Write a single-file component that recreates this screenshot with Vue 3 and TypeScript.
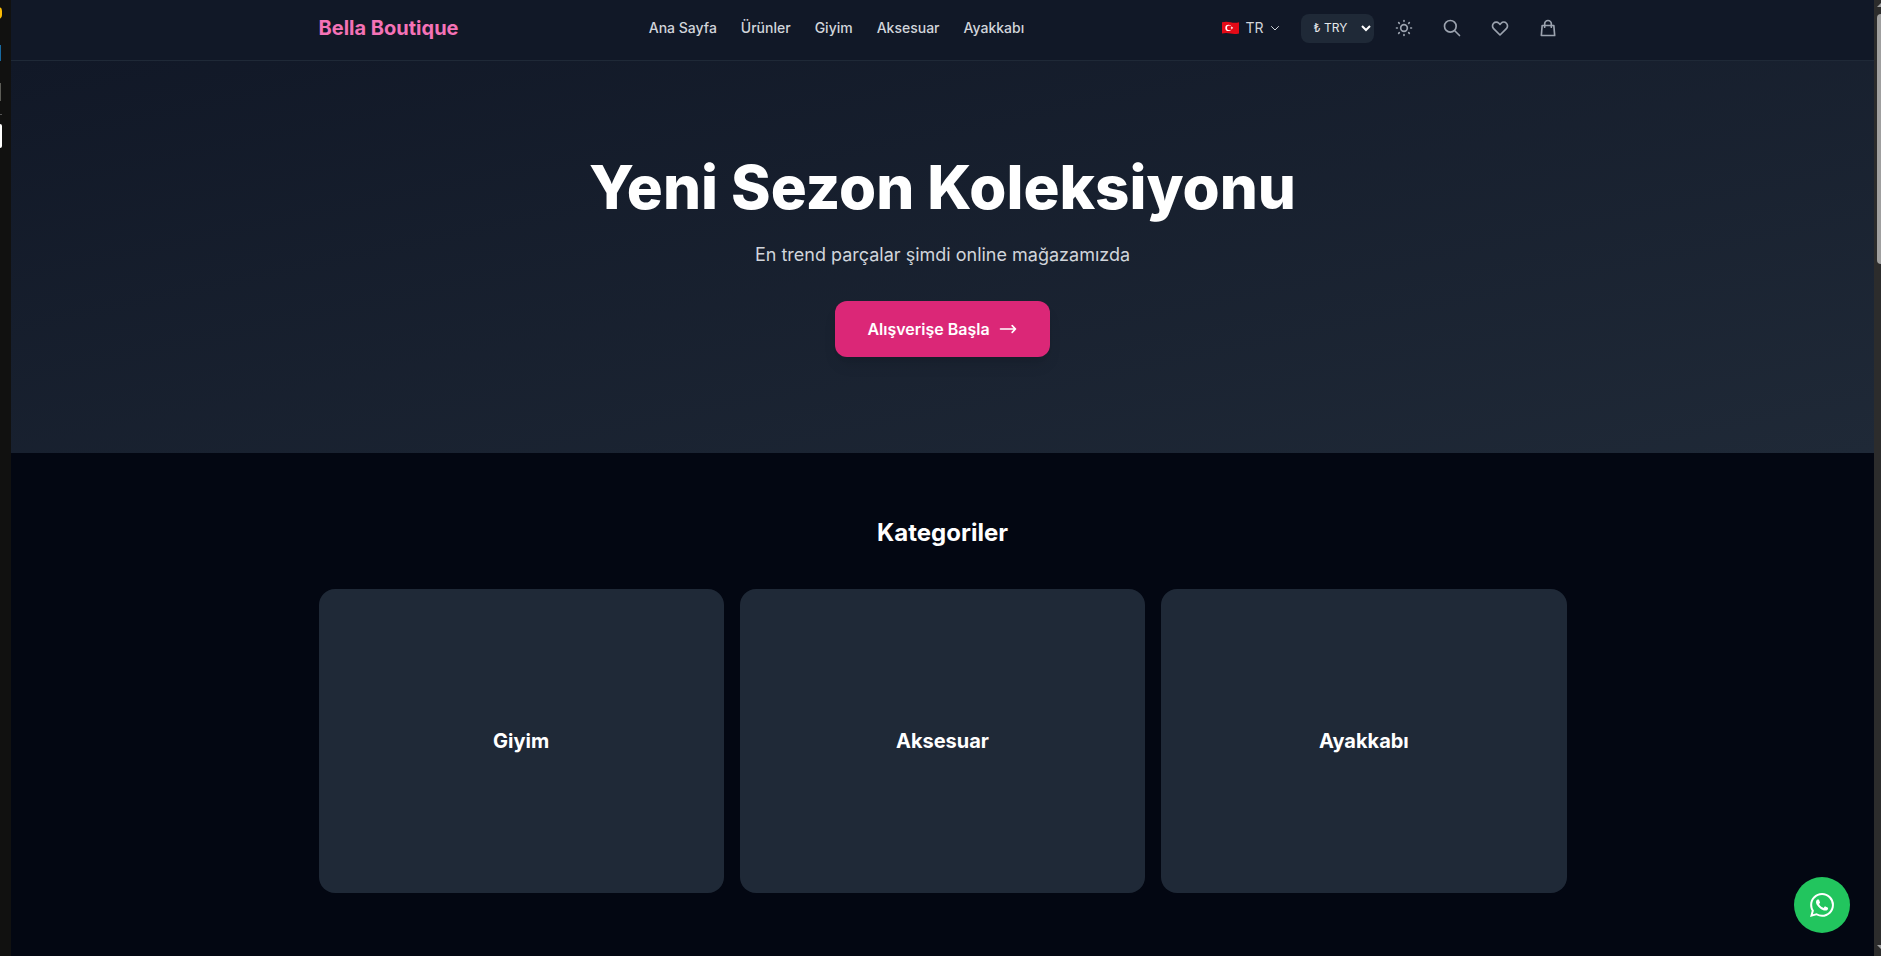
<script setup lang="ts">
import { ref } from 'vue'

interface NavItem {
  label: string
  href: string
}

const navItems: NavItem[] = [
  { label: 'Ana Sayfa', href: '#' },
  { label: 'Ürünler', href: '#urunler' },
  { label: 'Giyim', href: '#giyim' },
  { label: 'Aksesuar', href: '#aksesuar' },
  { label: 'Ayakkabı', href: '#ayakkabi' },
]

const categories: NavItem[] = [
  { label: 'Giyim', href: '#giyim' },
  { label: 'Aksesuar', href: '#aksesuar' },
  { label: 'Ayakkabı', href: '#ayakkabi' },
]

const currency = ref('TRY')
</script>

<template>
  <div class="screen">
    <div class="dock" aria-hidden="true">
      <span class="dock-dot"></span>
      <span class="dock-blue"></span>
      <span class="dock-gray"></span>
      <span class="dock-line"></span>
      <span class="dock-white"></span>
    </div>

    <div class="page">
      <header class="header">
        <div class="container header-row">
          <a class="logo" href="#">Bella Boutique</a>

          <nav class="nav">
            <a v-for="item in navItems" :key="item.label" :href="item.href">{{ item.label }}</a>
          </nav>

          <div class="tools">
            <button class="lang" type="button">
              <svg class="flag" viewBox="0 0 17 14" aria-hidden="true">
                <path d="M0 1.2Q4 .2 8.5 1.2T17 1.2V12.4Q13 13.6 8.5 12.6T0 12.6Z" fill="#e30a17" />
                <circle cx="6.4" cy="6.9" r="3.1" fill="#fff" />
                <circle cx="7.3" cy="6.9" r="2.4" fill="#e30a17" />
                <path d="M8.3 6.9l1.1-.4V5.4l.7.9 1.1-.3-.7.9.7.9-1.1-.3-.7.9V7.300z" fill="#fff" />
              </svg>
              <span>TR</span>
              <svg class="chevron" viewBox="0 0 24 24" aria-hidden="true">
                <path d="M19 9l-7 7-7-7" />
              </svg>
            </button>

            <span class="currency">
              <select v-model="currency" aria-label="Para birimi">
                <option value="TRY">₺ TRY</option>
                <option value="USD">$ USD</option>
                <option value="EUR">€ EUR</option>
              </select>
              <svg viewBox="0 0 10 10" aria-hidden="true"><path d="M1 3L5 7 9 3" /></svg>
            </span>

            <button class="icon" type="button" aria-label="Tema">
              <svg viewBox="0 0 24 24">
                <path d="M12 3v1m0 16v1m9-9h-1M4 12H3m15.364 6.364l-.707-.707M6.343 6.343l-.707-.707m12.728 0l-.707.707M6.343 17.657l-.707.707M16 12a4 4 0 11-8 0 4 4 0 018 0z" />
              </svg>
            </button>
            <button class="icon" type="button" aria-label="Ara">
              <svg viewBox="0 0 24 24">
                <path d="M21 21l-6-6m2-5a7 7 0 11-14 0 7 7 0 0114 0z" />
              </svg>
            </button>
            <button class="icon" type="button" aria-label="Favoriler">
              <svg viewBox="0 0 24 24">
                <path d="M4.318 6.318a4.500 4.500 0 000 6.364L12 20.364l7.682-7.682a4.500 4.500 0 00-6.364-6.364L12 7.636l-1.318-1.318a4.500 4.500 0 00-6.364 0z" />
              </svg>
            </button>
            <button class="icon" type="button" aria-label="Sepet">
              <svg viewBox="0 0 24 24">
                <path d="M16 11V7a4 4 0 00-8 0v4M5 9h14l1 12H4L5 9z" />
              </svg>
            </button>
          </div>
        </div>
      </header>

      <main>
        <section class="hero">
          <h1>Yeni Sezon Koleksiyonu</h1>
          <p>En trend parçalar şimdi online mağazamızda</p>
          <a class="cta" href="#urunler">
            Alışverişe Başla
            <svg viewBox="0 0 24 24" aria-hidden="true">
              <path d="M17 8l4 4m0 0l-4 4m4-4H3" />
            </svg>
          </a>
        </section>

        <section class="container categories">
          <h2>Kategoriler</h2>
          <div class="grid">
            <a v-for="cat in categories" :key="cat.label" class="card" :href="cat.href">
              <h3>{{ cat.label }}</h3>
            </a>
          </div>
        </section>
      </main>

      <a class="whatsapp" href="#whatsapp" aria-label="WhatsApp">
        <svg viewBox="0 0 24 24" aria-hidden="true">
          <path d="M17.472 14.382c-.297-.149-1.758-.867-2.030-.967-.273-.099-.471-.148-.670.150-.197.297-.767.966-.940 1.164-.173.199-.347.223-.644.075-.297-.150-1.255-.463-2.390-1.475-.883-.788-1.480-1.761-1.653-2.059-.173-.297-.018-.458.130-.606.134-.133.298-.347.446-.520.149-.174.198-.298.298-.497.099-.198.050-.371-.025-.520-.075-.149-.669-1.612-.916-2.207-.242-.579-.487-.500-.669-.510-.173-.008-.371-.010-.570-.010-.198 0-.520.074-.792.372-.272.297-1.040 1.016-1.040 2.479 0 1.462 1.065 2.875 1.213 3.074.149.198 2.096 3.200 5.077 4.487.709.306 1.262.489 1.694.625.712.227 1.360.195 1.871.118.571-.085 1.758-.719 2.006-1.413.248-.694.248-1.289.173-1.413-.074-.124-.272-.198-.570-.347m-5.421 7.403h-.004a9.870 9.870 0 01-5.031-1.378l-.361-.214-3.741.982.998-3.648-.235-.374a9.860 9.860 0 01-1.510-5.260c.001-5.450 4.436-9.884 9.888-9.884 2.640 0 5.122 1.030 6.988 2.898a9.825 9.825 0 012.893 6.994c-.003 5.450-4.437 9.884-9.885 9.884m8.413-18.297A11.815 11.815 0 0012.050 0C5.495 0 .160 5.335.157 11.892c0 2.096.547 4.142 1.588 5.945L.057 24l6.305-1.654a11.882 11.882 0 005.683 1.448h.005c6.554 0 11.890-5.335 11.893-11.893a11.821 11.821 0 00-3.480-8.413z" />
        </svg>
      </a>
    </div>

    <div class="scrollbar" aria-hidden="true">
      <span class="arrow-up"></span>
      <span class="thumb"></span>
      <span class="arrow-down"></span>
    </div>
  </div>
</template>

<style>
body {
  background: #030712;
}
</style>

<style scoped>
.screen {
  display: flex;
  min-height: 100vh;
  overflow: hidden;
  font-family: Inter, "Liberation Sans", sans-serif;
  color: #fff;
}

.screen *,
.screen *::before {
  box-sizing: border-box;
}

a {
  color: inherit;
  text-decoration: none;
}

h1,
h2,
h3,
p {
  margin: 0;
}

button {
  font: inherit;
  border: 0;
  background: none;
  cursor: pointer;
}

/* Edge of the desktop dock */
.dock {
  flex: 0 0 11px;
  display: flex;
  flex-direction: column;
  align-items: flex-start;
  overflow: hidden;
  background: #111110;
}

.dock span {
  flex: none;
}

.dock-dot {
  width: 12px;
  height: 12px;
  margin: 7px 0 0 -10px;
  border-radius: 4px;
  background: #fcbc05;
}

.dock-blue {
  width: 1px;
  height: 16px;
  margin-top: 26px;
  background: #1769a0;
}

.dock-gray {
  width: 1px;
  height: 18px;
  margin-top: 22px;
  background: #5c5c56;
}

.dock-line {
  width: 2px;
  height: 1px;
  margin-top: 13px;
  background: #555;
}

.dock-white {
  width: 2px;
  height: 24px;
  margin-top: 9px;
  border-radius: 0 2px 2px 0;
  background: #fff;
}

.page {
  flex: 1;
  min-width: 0;
  background: #030712;
}

.container {
  width: 100%;
  max-width: 1280px;
  margin: 0 auto;
  padding: 0 16px;
}

.header {
  border-bottom: 1px solid #1f2937;
  background: #111827;
}

.header-row {
  display: flex;
  align-items: center;
  justify-content: space-between;
  height: 60px;
  padding-bottom: 4px;
}

.logo {
  font-size: 20px;
  line-height: 28px;
  font-weight: 700;
  color: #f472b6;
}

.nav {
  display: flex;
  gap: 24px;
  font-size: 14px;
  line-height: 20px;
  font-weight: 500;
  color: #d1d5db;
}

.tools {
  display: flex;
  align-items: center;
  gap: 12px;
}

.lang {
  display: flex;
  align-items: center;
  gap: 6px;
  padding: 6px 8px;
  font-size: 14px;
  line-height: 20px;
  color: #d1d5db;
}

.flag {
  width: 17px;
  height: 14px;
}

.chevron {
  width: 12px;
  height: 12px;
  fill: none;
  stroke: currentColor;
  stroke-width: 2;
  stroke-linecap: round;
  stroke-linejoin: round;
}

.currency {
  position: relative;
  display: flex;
}

.currency select {
  appearance: none;
  width: 73px;
  height: 29px;
  padding: 0 12px;
  border: 0;
  border-radius: 8px;
  background: #1f2937;
  color: #e5e7eb;
  font: 400 12px/16px Inter, "Liberation Sans", sans-serif;
}

.currency svg {
  position: absolute;
  top: 9px;
  right: 3px;
  width: 10px;
  height: 10px;
  fill: none;
  stroke: #fff;
  stroke-width: 2;
  pointer-events: none;
}

.icon {
  display: flex;
  padding: 8px;
  color: #9ca3af;
}

.icon svg {
  width: 20px;
  height: 20px;
  fill: none;
  stroke: currentColor;
  stroke-width: 2;
  stroke-linecap: round;
  stroke-linejoin: round;
}

.hero {
  display: flex;
  flex-direction: column;
  align-items: center;
  padding: 96px 16px;
  background: linear-gradient(to bottom right, #111827, #1f2937);
  text-align: center;
}

.hero h1 {
  margin-bottom: 24px;
  font-size: 60px;
  line-height: 60px;
  font-weight: 800;
}

.hero p {
  margin-bottom: 32px;
  font-size: 18px;
  line-height: 28px;
  color: #d1d5db;
}

.cta {
  display: flex;
  align-items: center;
  gap: 8px;
  padding: 16px 32px;
  border-radius: 12px;
  background: #db2777;
  box-shadow: 0 10px 15px -3px rgb(0 0 0 / 10%), 0 4px 6px -4px rgb(0 0 0 / 10%);
  font-size: 16px;
  line-height: 24px;
  font-weight: 600;
}

.cta svg {
  width: 20px;
  height: 20px;
  fill: none;
  stroke: currentColor;
  stroke-width: 2;
  stroke-linecap: round;
  stroke-linejoin: round;
}

.categories {
  padding-top: 64px;
  padding-bottom: 63px;
}

.categories h2 {
  margin-bottom: 40px;
  font-size: 24px;
  line-height: 32px;
  font-weight: 700;
  text-align: center;
}

.grid {
  display: grid;
  grid-template-columns: repeat(3, 1fr);
  gap: 16px;
}

.card {
  display: flex;
  align-items: center;
  justify-content: center;
  aspect-ratio: 4 / 3;
  border-radius: 16px;
  background: #1f2937;
}

.card h3 {
  font-size: 20px;
  line-height: 28px;
  font-weight: 700;
}

.whatsapp {
  position: fixed;
  right: 31px;
  bottom: 23px;
  display: flex;
  align-items: center;
  justify-content: center;
  width: 56px;
  height: 56px;
  border-radius: 50%;
  background: #22c55e;
}

.whatsapp svg {
  width: 24px;
  height: 24px;
  fill: #fff;
}

.scrollbar {
  flex: 0 0 7px;
  display: flex;
  flex-direction: column;
  align-items: flex-end;
  overflow: hidden;
  background: #2c2c2c;
}

.arrow-up {
  width: 4px;
  height: 4px;
  margin-top: 3px;
  background: #9f9f9f;
  clip-path: polygon(100% 0, 100% 100%, 0 100%);
}

.thumb {
  width: 4px;
  height: 250px;
  margin-top: 7px;
  border-radius: 4px 0 0 4px;
  background: #9f9f9f;
}

.arrow-down {
  width: 4px;
  height: 4px;
  margin-top: auto;
  margin-bottom: 7px;
  background: #9f9f9f;
  clip-path: polygon(0 0, 100% 0, 100% 100%);
}
</style>
